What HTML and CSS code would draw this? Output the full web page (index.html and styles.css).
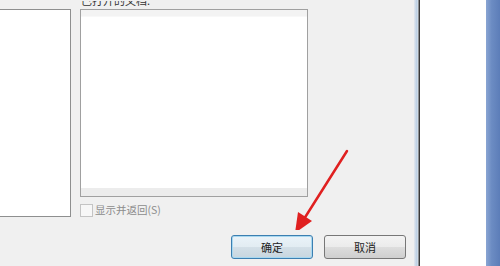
FILE: index.html
```html
<!DOCTYPE html>
<html lang="zh-CN">
<head>
    <meta charset="UTF-8">
    <title>显示并返回</title>
    <link rel="stylesheet" href="styles.css">
</head>
<body>
    <div class="screen">
        <div class="dialog">
            <div class="lists">
                <div class="listbox left"></div>
                <div class="right-col">
                    <div class="caption"><span>已打开的文档:</span></div>
                    <div class="listbox main">
                        <div class="head-strip"></div>
                        <div class="list-body"></div>
                        <div class="foot-strip"></div>
                    </div>
                    <label class="check">
                        <span class="box"></span>
                        <span class="check-text">显示并返回(S)</span>
                    </label>
                </div>
            </div>
            <div class="buttons">
                <button class="btn default">确定</button>
                <button class="btn">取消</button>
            </div>

            <svg class="arrow" width="120" height="100" viewBox="0 0 120 100">
                <line x1="117" y1="21" x2="74" y2="89" stroke="#e02020" stroke-width="2.5" stroke-linecap="round"/>
                <polygon points="65,103 68,82 82,91" fill="#e02020"/>
            </svg>
        </div>
        <div class="edge"></div>
        <div class="page"></div>
        <div class="frame"></div>
    </div>
</body>
</html>
```

FILE: styles.css
```css
body {
    margin: 0;
    width: 500px;
    height: 266px;
    overflow: hidden;
    font-family: "Noto Sans CJK SC", "Liberation Sans", sans-serif;
}

.screen {
    display: flex;
    height: 266px;
}

.dialog {
    position: relative;
    width: 414px;
    background-color: #f0f0f0;
}

.lists {
    display: flex;
    gap: 9px;
    padding-top: 9px;
}

.listbox {
    background-color: #ffffff;
    border: 1px solid #8e8f8f;
}

.left {
    width: 70px;
    height: 206px;
    margin-left: -1px;
}

.right-col {
    display: flex;
    flex-direction: column;
    position: relative;
}

.caption {
    position: absolute;
    top: -8px;
    left: 1px;
    height: 5px;
    overflow: hidden;
    font-size: 11px;
    line-height: 12px;
    color: #333;
}

.caption span {
    display: block;
    margin-top: -7px;
}

.main {
    width: 226px;
    height: 186px;
    display: flex;
    flex-direction: column;
    border-color: #a0a0a0;
}

.head-strip {
    height: 6px;
    background-color: #f3f3f3;
    border-bottom: 1px solid #f8f8f8;
}

.list-body {
    flex: 1;
}

.foot-strip {
    height: 8px;
    background-color: #ececec;
}

.check {
    display: flex;
    align-items: center;
    gap: 2px;
    margin-top: 6px;
}

.box {
    width: 11px;
    height: 11px;
    border: 1px solid #c4c4c4;
    background-color: #f7f7f7;
}

.check-text {
    font-size: 10.5px;
    color: #8c8c8c;
    line-height: 14px;
}

.buttons {
    display: flex;
    gap: 11px;
    padding-left: 231px;
    margin-top: 18px;
}

.btn {
    width: 82px;
    height: 24px;
    border: 1px solid #777;
    border-radius: 3px;
    background: linear-gradient(#f3f3f3, #ebebeb 50%, #dddddd 51%, #cfcfcf);
    font-family: "Noto Sans CJK SC", sans-serif;
    font-size: 11px;
    color: #222;
    padding: 0;
}

.btn.default {
    border-color: #3c7fb1;
    box-shadow: inset 0 0 0 1px #a8d8f0;
    background: linear-gradient(#eaf3f9, #e2ecf2 50%, #d3dfe7 51%, #c8d6df);
}

.arrow {
    position: absolute;
    left: 230px;
    top: 130px;
}

.edge {
    width: 6px;
    background: linear-gradient(to right, #e4e8ee 0, #c6d6e8 2px, #b8cde2 3px, #dfe6ee 4px, #3a3a3a 5px);
}

.page {
    width: 66px;
    background-color: #ffffff;
}

.frame {
    flex: 1;
    background: linear-gradient(to right, #8aa5d3, #6c8cc3 40%, #5c7db8);
}
```
